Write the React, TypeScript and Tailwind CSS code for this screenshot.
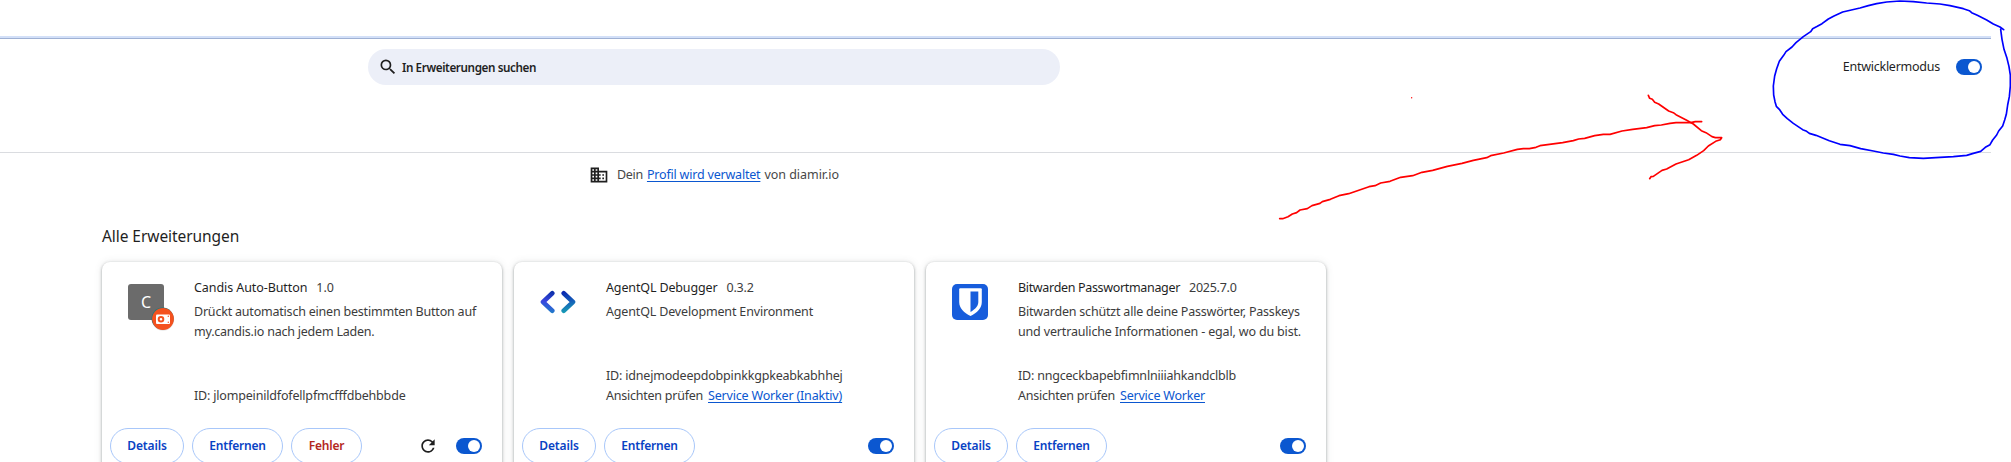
import type { ReactNode } from "react";
import { MdDomain, MdRefresh, MdSearch } from "react-icons/md";

function Toggle() {
  return (
    <span className="flex h-4 w-[26px] shrink-0 items-center justify-end rounded-full bg-[#0b57d0] pr-0.5">
      <span className="size-3 rounded-full bg-white" />
    </span>
  );
}

function CandisIcon() {
  return (
    <div className="relative flex size-9 items-center justify-center rounded-[3px] bg-[#6b6b6b] text-[16px] text-white">
      C
      <svg className="absolute top-[23px] left-[23px] size-6" viewBox="0 0 24 24">
        <circle cx="12" cy="12.6" r="11.2" fill="#000" opacity="0.1" />
        <circle cx="11.6" cy="11.5" r="11" fill="#147a80" />
        <circle cx="12" cy="12" r="10.9" fill="#f4511e" />
        <rect x="5" y="7.5" width="14" height="9.5" rx="1" fill="#fff" />
        <circle cx="10" cy="12.2" r="2.3" fill="none" stroke="#f4511e" strokeWidth="2" />
        <circle cx="17.3" cy="9.3" r="0.7" fill="#f4511e" />
        <circle cx="17.3" cy="15.3" r="0.7" fill="#f4511e" />
      </svg>
    </div>
  );
}

function AgentIcon() {
  return (
    <svg className="size-9" viewBox="0 0 36 36" fill="none" strokeWidth="4.6" strokeLinecap="round" strokeLinejoin="round">
      <defs>
        <linearGradient id="left" gradientUnits="userSpaceOnUse" x1="14" y1="8" x2="10" y2="29">
          <stop offset="0" stopColor="#0b2fa8" />
          <stop offset="0.5" stopColor="#3a45e0" />
          <stop offset="1" stopColor="#1f7fc8" />
        </linearGradient>
        <linearGradient id="right" gradientUnits="userSpaceOnUse" x1="24" y1="8" x2="28" y2="29">
          <stop offset="0" stopColor="#0a28b0" />
          <stop offset="0.5" stopColor="#1560b8" />
          <stop offset="1" stopColor="#17a3b5" />
        </linearGradient>
      </defs>
      <path d="M12.3 9.3 3 18l9.3 8.7" stroke="url(#left)" />
      <path d="M23.7 9.3 33 18l-9.3 8.7" stroke="url(#right)" />
    </svg>
  );
}

function BitwardenIcon() {
  return (
    <svg className="size-9" viewBox="0 0 36 36">
      <rect width="36" height="36" rx="5" fill="#175ddc" />
      <path d="M8.2 4.2h20.6a1 1 0 0 1 1 1V18c0 6-4.500 10.600-11.300 14C11.700 28.600 7.200 24 7.200 18V5.200a1 1 0 0 1 1-1z" fill="#fff" />
      <path d="M18.500 7.500h7.800V18c0 4.200-3.200 7.200-7.800 10z" fill="#175ddc" />
    </svg>
  );
}

function ActionButton({ className, children }: { className: string; children: ReactNode }) {
  return (
    <button className={`flex h-9 items-center justify-center rounded-full border border-[#a8c7fa] text-[12px] font-semibold ${className}`}>
      {children}
    </button>
  );
}

type CardProps = {
  icon: ReactNode;
  name: ReactNode;
  version: ReactNode;
  description: ReactNode;
  id: ReactNode;
  worker?: ReactNode;
  unpacked?: boolean;
};

function Card({ icon, name, version, description, id, worker, unpacked }: CardProps) {
  return (
    <article className="flex h-[212px] w-[400px] shrink-0 flex-col rounded-lg bg-white shadow-[0_1px_2px_rgba(60,64,67,0.3),0_1px_3px_1px_rgba(60,64,67,0.15),0_0_8px_rgba(60,64,67,0.1)]">
      <div className="flex h-[144px] pt-4 pl-[26px]">
        <div className="mt-1.5 size-9 shrink-0">{icon}</div>
        <div className="ml-[30px] flex flex-col text-[#3c3c3c]">
          <h3 className="flex h-5 items-center gap-[9px]">
            <span className="text-[#1f1f1f]">{name}</span>
            {version}
          </h3>
          <div className="mt-1 leading-5 whitespace-nowrap">{description}</div>
          <div className="mt-auto leading-5 whitespace-nowrap">
            <div>{id}</div>
            {worker && (
              <div className="flex gap-[5px]">
                <span className="tracking-[-0.24px]">Ansichten prüfen</span>
                {worker}
              </div>
            )}
          </div>
        </div>
      </div>
      <div className="mt-[22px] flex items-center pr-5 pl-2">
        <ActionButton className="w-[74px] tracking-[-0.13px] text-[#0842c4]">Details</ActionButton>
        <ActionButton className="ml-2 w-[91px] tracking-[-0.19px] text-[#0842c4]">Entfernen</ActionButton>
        {unpacked && <ActionButton className="ml-2 w-[71px] tracking-[-0.2px] text-[#b3261e]">Fehler</ActionButton>}
        <div className="ml-auto flex items-center gap-[18px]">
          {unpacked && <MdRefresh className="size-5 text-[#1f1f1f]" />}
          <Toggle />
        </div>
      </div>
    </article>
  );
}

function Annotations() {
  return (
    <svg
      className="pointer-events-none absolute inset-0"
      width="2011"
      height="462"
      fill="none"
      strokeWidth="5"
      strokeLinecap="round"
      strokeLinejoin="round"
    >
      <g stroke="#f00" transform="translate(1260 80) scale(0.33333)">
        <path d="M59 416H68L84 410 97 402 110 398 120 390 142 386 156 377 180 370 187 365 211 358 237 347 266 341 327 320 345 317 362 309 390 304 422 292 458 287 486 277 518 271 562 259 606 250 640 241 680 233 692 227 731 219 772 208 790 206H808L828 202 840 197 908 188 940 182 956 177 974 175 1004 167 1030 163H1050L1086 153 1118 148 1160 143 1184 137 1204 135 1230 130 1248 128H1292L1306 125H1325" />
        <path d="M1165 46 1169 55 1177 58 1184 67 1196 72 1226 93 1240 98 1248 104 1280 121 1300 132 1324 152 1338 158 1356 170 1366 173H1385L1381 179 1367 184 1345 198 1331 212 1310 226 1286 239 1248 252 1220 267 1206 271 1180 289 1173 290 1169 296" />
        <path d="M455 53v.3" strokeWidth="4" />
      </g>
      <path
        stroke="#00f"
        transform="translate(1740 0) scale(0.33333)"
        d="M791 89 780 81 760 72 740 60 712 46 695 38 688 32 670 26 630 17 600 12 560 9 520 5 480 3 440 6 410 11 385 17 360 24 308 36 282 48 265 57 246 71 232 79 218 86 212 95 190 110 168 128 156 141 138 155 131 166 118 184 110 206 104 228 100 258 101 285 105 305 109 319 118 328 128 343 142 356 160 370 188 389 200 394 208 400 228 406 268 422 300 433 330 437 362 446 400 453 430 459 460 463 480 468 508 473 550 475 600 472 640 470 680 466 700 460 722 454 736 442 750 434 758 420 770 405 776 393 788 378 794 360 799 343 803 315 808 290 811 258 811 225 807 200 801 175 792 148 786 118 782 88"
      />
    </svg>
  );
}

export default function App() {
  return (
    <div className="relative h-[462px] w-[2011px] overflow-hidden bg-white font-['Noto_Sans','Open_Sans',sans-serif] text-[12.5px]">
      <header className="mt-9 flex h-[117px] w-[1991px] flex-col border-b border-[#dadce0]">
        <div className="h-[3px] border-b border-[#9fb1d4] bg-[#d3e0f8]" />
        <div className="mt-2.5 flex h-9 items-center pl-[368px]">
          <div className="flex h-9 w-[692px] items-center rounded-full bg-[#eceff8] pl-2.5">
            <MdSearch className="size-5 text-[#1f1f1f]" />
            <span className="ml-1 pt-px text-[11.7px] font-semibold tracking-[-0.4px] text-[#1f1f1f]">In Erweiterungen suchen</span>
          </div>
          <div className="ml-auto flex items-center gap-[16px] pr-[9px]">
            <span className="pt-px tracking-[-0.25px] text-[#1f1f1f]">Entwicklermodus</span>
            <Toggle />
          </div>
        </div>
      </header>

      <div className="mt-3 flex h-5 items-center pl-[589px] text-[#474747]">
        <MdDomain className="size-5 text-[#1f1f1f]" />
        <span className="ml-[8px] tracking-[-0.3px]">Dein</span>
        <a className="ml-1 tracking-[-0.2px] text-[#0b57d0] underline underline-offset-2">Profil wird verwaltet</a>
        <span className="ml-1 tracking-[-0.03px]">von diamir.io</span>
      </div>

      <main className="pl-[102px]">
        <h2 className="mt-[40px] flex h-6 items-center text-[15.5px] tracking-[-0.06px] text-[#1f1f1f]">Alle Erweiterungen</h2>
        <div className="mt-[13px] flex gap-3">
          <Card
            unpacked
            icon={<CandisIcon />}
            name={<span className="tracking-[-0.08px]">Candis Auto-Button</span>}
            version={<span>1.0</span>}
            description={
              <>
                <p className="tracking-[-0.207px]">Drückt automatisch einen bestimmten Button auf</p>
                <p className="tracking-[-0.216px]">my.candis.io nach jedem Laden.</p>
              </>
            }
            id={<span className="tracking-[-0.18px]">ID: jlompeinildfofellpfmcfffdbehbbde</span>}
          />
          <Card
            icon={<AgentIcon />}
            name={<span className="tracking-[-0.14px]">AgentQL Debugger</span>}
            version={<span className="tracking-[-0.2px]">0.3.2</span>}
            description={<p className="tracking-[-0.16px]">AgentQL Development Environment</p>}
            id={<span className="tracking-[-0.19px]">ID: idnejmodeepdobpinkkgpkeabkabhhej</span>}
            worker={<a className="tracking-[-0.18px] text-[#0b57d0] underline underline-offset-2">Service Worker (Inaktiv)</a>}
          />
          <Card
            icon={<BitwardenIcon />}
            name={<span className="tracking-[-0.33px]">Bitwarden Passwortmanager</span>}
            version={<span className="tracking-[-0.26px]">2025.7.0</span>}
            description={
              <>
                <p className="tracking-[-0.2px]">Bitwarden schützt alle deine Passwörter, Passkeys</p>
                <p className="tracking-[-0.165px]">und vertrauliche Informationen - egal, wo du bist.</p>
              </>
            }
            id={<span className="tracking-[-0.2px]">ID: nngceckbapebfimnlniiiahkandclblb</span>}
            worker={<a className="tracking-[-0.21px] text-[#0b57d0] underline underline-offset-2">Service Worker</a>}
          />
        </div>
      </main>
      <Annotations />
    </div>
  );
}
